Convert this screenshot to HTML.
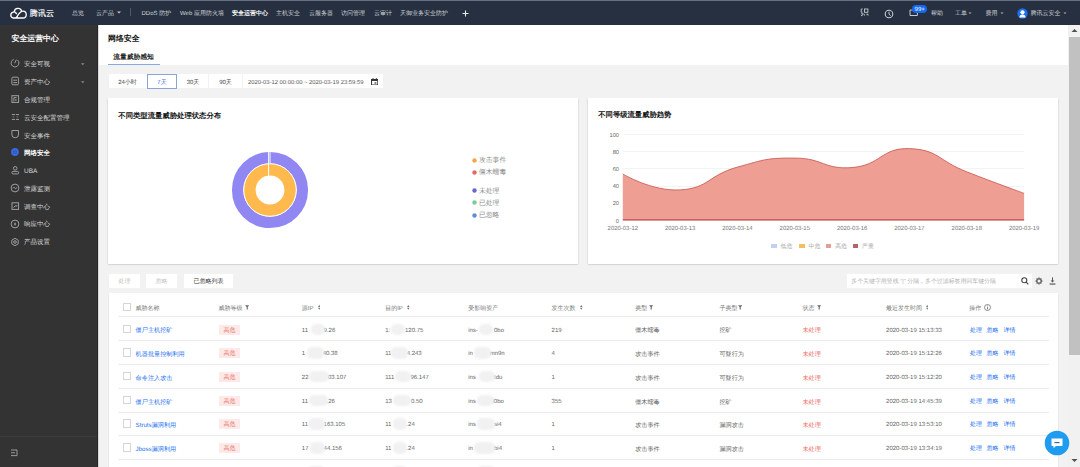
<!DOCTYPE html><html><head><meta charset="utf-8"><style>
html,body{margin:0;padding:0;width:1080px;height:467px;overflow:hidden;background:#f2f2f2;font-family:"Liberation Sans",sans-serif;text-rendering:geometricPrecision;}
.t{position:absolute;white-space:nowrap;}
.r{position:absolute;box-sizing:border-box;}
svg{position:absolute;}
</style></head><body>
<div class="r" style="left:0px;top:0px;width:1080px;height:25px;background:#263040;"></div>
<div class="r" style="left:0px;top:0px;width:1080px;height:1px;background:#687080;"></div>
<svg style="left:6px;top:3px" width="24" height="20" viewBox="0 0 24 20"><path d="M15.7 7.9 A3.9 3.9 0 0 0 8.2 8.6 L10.5 10.6 M7.5 9.1 A3.0 3.0 0 0 0 7.1 15.0 L17.0 15.0 A3.4 3.4 0 0 0 16.7 8.2 C14.6 8.2 13.4 10.2 12.3 11.7 C11.3 13.1 10.6 14.6 9.6 15.0" fill="none" stroke="#fff" stroke-width="1.3" stroke-linejoin="round" stroke-linecap="round"/></svg>
<div class="t" style="left:29.5px;top:7.85px;font-size:8.2px;line-height:12.299999999999999px;color:#ffffff;font-weight:normal;-webkit-text-stroke:0.15px #fff;">腾讯云</div>
<div class="t" style="left:72px;top:10.10px;font-size:6px;line-height:9.0px;color:#d2d5db;font-weight:normal;">总览</div>
<div class="t" style="left:96px;top:10.10px;font-size:6px;line-height:9.0px;color:#d2d5db;font-weight:normal;">云产品</div>
<svg style="left:117px;top:11px" width="4" height="3"><path d="M0 0.5 L4 0.5 L2 2.5Z" fill="#c5c9d0"/></svg>
<div class="r" style="left:130px;top:8px;width:1px;height:8px;background:#4f5664;"></div>
<div class="t" style="left:141.5px;top:10.10px;font-size:6px;line-height:9.0px;color:#d2d5db;font-weight:normal;">DDoS 防护</div>
<div class="t" style="left:180px;top:10.10px;font-size:6px;line-height:9.0px;color:#d2d5db;font-weight:normal;">Web 应用防火墙</div>
<div class="t" style="left:232px;top:10.10px;font-size:6px;line-height:9.0px;color:#fff;font-weight:bold;">安全运营中心</div>
<div class="t" style="left:276px;top:10.10px;font-size:6px;line-height:9.0px;color:#d2d5db;font-weight:normal;">主机安全</div>
<div class="t" style="left:309px;top:10.10px;font-size:6px;line-height:9.0px;color:#d2d5db;font-weight:normal;">云服务器</div>
<div class="t" style="left:341px;top:10.10px;font-size:6px;line-height:9.0px;color:#d2d5db;font-weight:normal;">访问管理</div>
<div class="t" style="left:374px;top:10.10px;font-size:6px;line-height:9.0px;color:#d2d5db;font-weight:normal;">云审计</div>
<div class="t" style="left:400px;top:10.10px;font-size:6px;line-height:9.0px;color:#d2d5db;font-weight:normal;">天御业务安全防护</div>
<svg style="left:462px;top:9.5px" width="7" height="7"><path d="M3.5 0.5V6.5M0.5 3.5H6.5" stroke="#e8eaee" stroke-width="1.1"/></svg>
<svg style="left:860px;top:8px" width="9" height="9" viewBox="0 0 9 9"><path d="M2.6 1H1.2V4.2H2.6" fill="none" stroke="#c5c9d0" stroke-width="0.9"/><rect x="4.5" y="1" width="3.4" height="3.3" fill="none" stroke="#c5c9d0" stroke-width="0.9"/><path d="M1 5.8H3.4L2.2 7.6H1M4.6 6.2V7.6M6.3 6.2H8V7.6" fill="none" stroke="#c5c9d0" stroke-width="0.9"/></svg>
<svg style="left:884px;top:8.5px" width="10" height="10" viewBox="0 0 10 10"><circle cx="5" cy="5" r="3.8" fill="none" stroke="#c5c9d0" stroke-width="1.1"/><path d="M5 2.7V5.2L6.6 6.6" fill="none" stroke="#c5c9d0" stroke-width="1"/></svg>
<svg style="left:908.5px;top:9px" width="10" height="8" viewBox="0 0 10 8"><path d="M1 1V6.5H8.4V3.5" fill="none" stroke="#c5c9d0" stroke-width="1"/><path d="M1 1H4L5.2 2.2" fill="none" stroke="#c5c9d0" stroke-width="0.9"/></svg>
<div class="r" style="left:912px;top:4.9px;width:15.4px;height:8.2px;background:#1667f0;border-radius:4.1px;"></div>
<div class="t" style="left:911.70px;width:16px;text-align:center;top:6.30px;font-size:6px;line-height:9.0px;color:#fff;font-weight:normal;">99+</div>
<div class="t" style="left:931px;top:10.10px;font-size:6px;line-height:9.0px;color:#d2d5db;font-weight:normal;">帮助</div>
<div class="t" style="left:955px;top:10.10px;font-size:6px;line-height:9.0px;color:#d2d5db;font-weight:normal;">工单</div>
<svg style="left:967.5px;top:12px" width="4" height="3"><path d="M0.5 0.6 L3.5 0.6 L2 2.1Z" fill="#b5bac3"/></svg>
<div class="t" style="left:985.5px;top:10.10px;font-size:6px;line-height:9.0px;color:#d2d5db;font-weight:normal;">费用</div>
<svg style="left:999.5px;top:12px" width="4" height="3"><path d="M0.5 0.6 L3.5 0.6 L2 2.1Z" fill="#b5bac3"/></svg>
<svg style="left:1017px;top:7.5px" width="11" height="11" viewBox="0 0 11 11"><circle cx="5.5" cy="5.5" r="5.2" fill="#1b6df2"/><circle cx="5.5" cy="4.3" r="2.1" fill="#fff"/><path d="M2.4 9.6 Q2.6 6.6 5.5 6.6 Q8.4 6.6 8.6 9.6 Z" fill="#fff"/></svg>
<div class="t" style="left:1030.5px;top:10.10px;font-size:6px;line-height:9.0px;color:#d2d5db;font-weight:normal;">腾讯云安全</div>
<svg style="left:1063px;top:12px" width="4" height="3"><path d="M0.5 0.6 L3.5 0.6 L2 2.1Z" fill="#b5bac3"/></svg>
<div class="r" style="left:0px;top:25px;width:98px;height:442px;background:#333333;"></div>
<div class="t" style="left:11.5px;top:33.17px;font-size:7.9px;line-height:11.850000000000001px;color:#fff;font-weight:bold;">安全运营中心</div>
<div class="t" style="left:24px;top:60.42px;font-size:6.5px;line-height:9.75px;color:#d9d9d9;font-weight:normal;">安全可视</div>
<svg style="left:81px;top:62.80px" width="4" height="3"><path d="M0 0.3 L3.5 0.3 L1.75 2.2Z" fill="#8a8a8a"/></svg>
<svg style="left:9px;top:57.30px" width="12" height="12" viewBox="0 0 12 12"><path d="M8.5 3.0 A3.9 3.9 0 1 1 4.67 2.34" fill="none" stroke="#a3a3a3" stroke-width="0.95"/><path d="M7.4 2.6 L5.7 6.2" fill="none" stroke="#a3a3a3" stroke-width="0.95"/></svg>
<div class="t" style="left:24px;top:78.19px;font-size:6.5px;line-height:9.75px;color:#d9d9d9;font-weight:normal;">资产中心</div>
<svg style="left:81px;top:80.57px" width="4" height="3"><path d="M0 0.3 L3.5 0.3 L1.75 2.2Z" fill="#8a8a8a"/></svg>
<svg style="left:9px;top:75.00px" width="12" height="12" viewBox="0 0 12 12"><rect x="2.9" y="2.2" width="6.5" height="7.6" rx="1" fill="none" stroke="#a3a3a3" stroke-width="0.95"/><path d="M4.3 5.2H8M4.3 7.6H8" fill="none" stroke="#a3a3a3" stroke-width="0.95"/></svg>
<div class="t" style="left:24px;top:95.97px;font-size:6.5px;line-height:9.75px;color:#d9d9d9;font-weight:normal;">合规管理</div>
<svg style="left:9px;top:93.40px" width="12" height="12" viewBox="0 0 12 12"><rect x="2.9" y="2.7" width="6.7" height="6.7" fill="none" stroke="#a3a3a3" stroke-width="0.95"/><path d="M4.9 8.5V4.6H7.6" fill="none" stroke="#a3a3a3" stroke-width="0.95"/><rect x="6.2" y="6.2" width="1.4" height="1.4" fill="#a3a3a3"/></svg>
<div class="t" style="left:24px;top:113.73px;font-size:6.5px;line-height:9.75px;color:#d9d9d9;font-weight:normal;">云安全配置管理</div>
<svg style="left:9px;top:111.00px" width="12" height="12" viewBox="0 0 12 12"><path d="M2.8 3.6H6M6.9 3.6H10M2.8 8.4H6M6.9 8.4H10" fill="none" stroke="#a3a3a3" stroke-width="0.95"/><path d="M3.6 6H5.2M7.6 6H9.2" fill="none" stroke="#8a8a8a" stroke-width="0.8"/></svg>
<div class="t" style="left:24px;top:131.50px;font-size:6.5px;line-height:9.75px;color:#d9d9d9;font-weight:normal;">安全事件</div>
<svg style="left:9px;top:128.00px" width="12" height="12" viewBox="0 0 12 12"><path d="M2.9 2.5H9.5V6.9Q9.5 9.7 6.2 9.7Q2.9 9.7 2.9 6.9Z" fill="none" stroke="#a3a3a3" stroke-width="0.95"/><circle cx="6.2" cy="8.3" r="0.8" fill="#333"/></svg>
<div class="t" style="left:24px;top:149.27px;font-size:6.5px;line-height:9.75px;color:#fff;font-weight:bold;">网络安全</div>
<svg style="left:9px;top:146.20px" width="12" height="12" viewBox="0 0 12 12"><circle cx="6" cy="6" r="3.9" fill="#3a69dc"/><path d="M4 5.1H8M4 7.1H8" stroke="#2a4fb8" stroke-width="0.8"/></svg>
<div class="t" style="left:24px;top:167.05px;font-size:6.5px;line-height:9.75px;color:#d9d9d9;font-weight:normal;">UBA</div>
<svg style="left:9px;top:164.10px" width="12" height="12" viewBox="0 0 12 12"><circle cx="6.2" cy="4.3" r="1.8" fill="none" stroke="#a3a3a3" stroke-width="0.95"/><rect x="2.9" y="7.4" width="6.8" height="2.5" rx="1.2" fill="none" stroke="#a3a3a3" stroke-width="0.95"/></svg>
<div class="t" style="left:24px;top:184.81px;font-size:6.5px;line-height:9.75px;color:#d9d9d9;font-weight:normal;">泄露监测</div>
<svg style="left:9px;top:182.20px" width="12" height="12" viewBox="0 0 12 12"><circle cx="6" cy="6" r="3.9" fill="none" stroke="#a3a3a3" stroke-width="0.95"/><path d="M3.9 6.3L5 5.2L6.5 6.8L8.1 5.4" fill="none" stroke="#a3a3a3" stroke-width="0.95"/></svg>
<div class="t" style="left:24px;top:202.58px;font-size:6.5px;line-height:9.75px;color:#d9d9d9;font-weight:normal;">调查中心</div>
<svg style="left:9px;top:200.20px" width="12" height="12" viewBox="0 0 12 12"><rect x="3" y="2.8" width="6.6" height="6.6" fill="none" stroke="#a3a3a3" stroke-width="0.95"/><path d="M4.6 7.6L6.2 5.8L7.4 6.4L8.2 5" fill="none" stroke="#a3a3a3" stroke-width="0.95"/></svg>
<div class="t" style="left:24px;top:220.36px;font-size:6.5px;line-height:9.75px;color:#d9d9d9;font-weight:normal;">响应中心</div>
<svg style="left:9px;top:217.70px" width="12" height="12" viewBox="0 0 12 12"><circle cx="6" cy="6" r="3.9" fill="none" stroke="#a3a3a3" stroke-width="0.95"/><ellipse cx="6" cy="6" rx="0.8" ry="1.6" fill="#a3a3a3"/></svg>
<div class="t" style="left:24px;top:238.12px;font-size:6.5px;line-height:9.75px;color:#d9d9d9;font-weight:normal;">产品设置</div>
<svg style="left:9px;top:236.10px" width="12" height="12" viewBox="0 0 12 12"><path d="M6 2.3L9.2 4.15V7.85L6 9.7L2.8 7.85V4.15Z" fill="none" stroke="#a3a3a3" stroke-width="0.95"/><circle cx="6" cy="6" r="1.3" fill="none" stroke="#a3a3a3" stroke-width="0.95"/></svg>
<div class="r" style="left:0px;top:436px;width:98px;height:1px;background:#3c3c3c;"></div>
<svg style="left:10px;top:449px" width="9" height="8" viewBox="0 0 9 8"><path d="M1 1H7M1 3.8H5M1 6.6H7M7 1V6.6" fill="none" stroke="#9a9a9a" stroke-width="1"/></svg>
<div class="r" style="left:97px;top:25px;width:1px;height:442px;background:#262626;"></div>
<div class="r" style="left:98px;top:25px;width:970px;height:40px;background:#fff;"></div>
<div class="r" style="left:98px;top:25px;width:1px;height:442px;background:#d9d9d9;"></div>
<div class="t" style="left:108px;top:32.77px;font-size:7.9px;line-height:11.850000000000001px;color:#111;font-weight:bold;">网络安全</div>
<div class="t" style="left:113.3px;top:53.34px;font-size:6.75px;line-height:10.125px;color:#222;font-weight:bold;">流量威胁感知</div>
<div class="r" style="left:108px;top:63.5px;width:52px;height:1.2px;background:#88a9e2;"></div>
<div class="r" style="left:108.5px;top:74px;width:68px;height:14px;background:#fff;"></div>
<div class="r" style="left:177px;top:74px;width:31px;height:14px;background:#fff;"></div>
<div class="r" style="left:208.5px;top:74px;width:33.5px;height:14px;background:#fff;"></div>
<div class="r" style="left:243px;top:74px;width:140px;height:14px;background:#fff;"></div>
<div class="r" style="left:146.5px;top:74px;width:30.5px;height:14.5px;background:#fff;border:0.9px solid #8ba4d6;"></div>
<div class="t" style="left:107.50px;width:40px;text-align:center;top:79.20px;font-size:6px;line-height:9.0px;color:#444;font-weight:normal;">24小时</div>
<div class="t" style="left:147.00px;width:30px;text-align:center;top:79.20px;font-size:6px;line-height:9.0px;color:#3b74e0;font-weight:normal;">7天</div>
<div class="t" style="left:178.00px;width:30px;text-align:center;top:79.20px;font-size:6px;line-height:9.0px;color:#444;font-weight:normal;">30天</div>
<div class="t" style="left:210.50px;width:30px;text-align:center;top:79.20px;font-size:6px;line-height:9.0px;color:#444;font-weight:normal;">90天</div>
<div class="t" style="left:248px;top:78.90px;font-size:5.87px;line-height:8.805px;color:#555;font-weight:normal;">2020-03-12 00:00:00 ~ 2020-03-19 23:59:59</div>
<svg style="left:370.8px;top:77.5px" width="7.4" height="7.4" viewBox="0 0 8 8"><path d="M0.6 1.5H7.4V7.5H0.6Z" fill="none" stroke="#333" stroke-width="1.1"/><path d="M0.6 1.5H7.4V3.2H0.6Z" fill="#333"/><path d="M2.2 0.1V1.5M5.8 0.1V1.5" stroke="#333" stroke-width="1"/><rect x="3.8" y="4.8" width="2" height="1.3" fill="#333"/></svg>
<div class="r" style="left:108px;top:98px;width:470px;height:166px;background:#fff;box-shadow:0 0.8px 1.5px rgba(0,0,0,0.3);"></div>
<div class="r" style="left:588px;top:98px;width:470px;height:166px;background:#fff;box-shadow:0 0.8px 1.5px rgba(0,0,0,0.3);"></div>
<div class="t" style="left:118.3px;top:109.54px;font-size:7.35px;line-height:11.024999999999999px;color:#111;font-weight:bold;">不同类型流量威胁处理状态分布</div>
<div class="t" style="left:598.3px;top:109.58px;font-size:7.3px;line-height:10.95px;color:#111;font-weight:bold;">不同等级流量威胁趋势</div>
<svg style="left:220px;top:140px" width="100" height="100" viewBox="0 0 100 100">
<circle cx="50" cy="50" r="32.3" fill="none" stroke="#9087f3" stroke-width="11.5"/>
<circle cx="50" cy="50" r="20.3" fill="none" stroke="#ffb94d" stroke-width="11.8"/>
<circle cx="50" cy="50" r="26.3" fill="none" stroke="#fff" stroke-width="1"/>
<path d="M48.6 12 V44" stroke="#fff" stroke-width="1"/>
<path d="M50.2 12 V24" stroke="#fff" stroke-width="0.7"/>
<path d="M49.4 12 V24" stroke="#c9c6f2" stroke-width="0.9"/>
</svg>
<svg style="left:471.7px;top:157.60px" width="5" height="5"><circle cx="2.5" cy="2.5" r="2.2" fill="#f7a645"/></svg>
<div class="t" style="left:478.9px;top:156.16px;font-size:6.85px;line-height:10.274999999999999px;color:#8a8a8a;font-weight:normal;">攻击事件</div>
<svg style="left:471.7px;top:169.60px" width="5" height="5"><circle cx="2.5" cy="2.5" r="2.2" fill="#e06a64"/></svg>
<div class="t" style="left:478.9px;top:168.16px;font-size:6.85px;line-height:10.274999999999999px;color:#8a8a8a;font-weight:normal;">僵木蠕毒</div>
<svg style="left:471.7px;top:188.40px" width="5" height="5"><circle cx="2.5" cy="2.5" r="2.2" fill="#6a66d2"/></svg>
<div class="t" style="left:478.9px;top:186.96px;font-size:6.85px;line-height:10.274999999999999px;color:#8a8a8a;font-weight:normal;">未处理</div>
<svg style="left:471.7px;top:200.40px" width="5" height="5"><circle cx="2.5" cy="2.5" r="2.2" fill="#78cf9a"/></svg>
<div class="t" style="left:478.9px;top:198.96px;font-size:6.85px;line-height:10.274999999999999px;color:#8a8a8a;font-weight:normal;">已处理</div>
<svg style="left:471.7px;top:212.60px" width="5" height="5"><circle cx="2.5" cy="2.5" r="2.2" fill="#5b8ee0"/></svg>
<div class="t" style="left:478.9px;top:211.16px;font-size:6.85px;line-height:10.274999999999999px;color:#8a8a8a;font-weight:normal;">已忽略</div>
<div class="r" style="left:622.8px;top:202.8px;width:401px;height:0.6px;background:#f3f3f3;"></div>
<div class="r" style="left:622.8px;top:185.6px;width:401px;height:0.6px;background:#f3f3f3;"></div>
<div class="r" style="left:622.8px;top:168.4px;width:401px;height:0.6px;background:#f3f3f3;"></div>
<div class="r" style="left:622.8px;top:151.2px;width:401px;height:0.6px;background:#f3f3f3;"></div>
<div class="r" style="left:622.8px;top:134.0px;width:401px;height:0.6px;background:#f3f3f3;"></div>
<div class="t" style="left:589.00px;width:30px;text-align:right;top:217.53px;font-size:5.7px;line-height:8.55px;color:#666;font-weight:normal;">0</div>
<div class="t" style="left:589.00px;width:30px;text-align:right;top:200.33px;font-size:5.7px;line-height:8.55px;color:#666;font-weight:normal;">20</div>
<div class="t" style="left:589.00px;width:30px;text-align:right;top:183.12px;font-size:5.7px;line-height:8.55px;color:#666;font-weight:normal;">40</div>
<div class="t" style="left:589.00px;width:30px;text-align:right;top:165.93px;font-size:5.7px;line-height:8.55px;color:#666;font-weight:normal;">60</div>
<div class="t" style="left:589.00px;width:30px;text-align:right;top:148.72px;font-size:5.7px;line-height:8.55px;color:#666;font-weight:normal;">80</div>
<div class="t" style="left:589.00px;width:30px;text-align:right;top:131.53px;font-size:5.7px;line-height:8.55px;color:#666;font-weight:normal;">100</div>
<div class="t" style="left:597.80px;width:50px;text-align:center;top:225.14px;font-size:5.95px;line-height:8.925px;color:#777;font-weight:normal;">2020-03-12</div>
<div class="t" style="left:655.13px;width:50px;text-align:center;top:225.14px;font-size:5.95px;line-height:8.925px;color:#777;font-weight:normal;">2020-03-13</div>
<div class="t" style="left:712.46px;width:50px;text-align:center;top:225.14px;font-size:5.95px;line-height:8.925px;color:#777;font-weight:normal;">2020-03-14</div>
<div class="t" style="left:769.79px;width:50px;text-align:center;top:225.14px;font-size:5.95px;line-height:8.925px;color:#777;font-weight:normal;">2020-03-15</div>
<div class="t" style="left:827.12px;width:50px;text-align:center;top:225.14px;font-size:5.95px;line-height:8.925px;color:#777;font-weight:normal;">2020-03-16</div>
<div class="t" style="left:884.45px;width:50px;text-align:center;top:225.14px;font-size:5.95px;line-height:8.925px;color:#777;font-weight:normal;">2020-03-17</div>
<div class="t" style="left:941.78px;width:50px;text-align:center;top:225.14px;font-size:5.95px;line-height:8.925px;color:#777;font-weight:normal;">2020-03-18</div>
<div class="t" style="left:999.11px;width:50px;text-align:center;top:225.14px;font-size:5.95px;line-height:8.925px;color:#777;font-weight:normal;">2020-03-19</div>
<svg style="left:0;top:0" width="1080" height="467" viewBox="0 0 1080 467">
<path d="M622.80 173.99 C622.80 173.99 651.98 191.59 680.13 189.90 C709.31 188.15 707.92 175.31 737.46 167.11 C765.25 159.40 766.14 157.97 794.79 158.08 C823.47 158.19 824.00 169.86 852.12 167.54 C881.33 165.13 881.13 147.56 909.45 148.62 C938.46 149.71 937.97 160.60 966.78 171.84 C995.30 182.96 1024.11 193.34 1024.11 193.34 L1024.11 220.0 L622.80 220.0 Z" fill="#ee9e93"/>
<path d="M622.80 173.99 C622.80 173.99 651.98 191.59 680.13 189.90 C709.31 188.15 707.92 175.31 737.46 167.11 C765.25 159.40 766.14 157.97 794.79 158.08 C823.47 158.19 824.00 169.86 852.12 167.54 C881.33 165.13 881.13 147.56 909.45 148.62 C938.46 149.71 937.97 160.60 966.78 171.84 C995.30 182.96 1024.11 193.34 1024.11 193.34" fill="none" stroke="#c9625b" stroke-width="0.9"/>
<rect x="622.8" y="219.1" width="401.31" height="1.5" fill="#c65858"/>
</svg>
<div class="r" style="left:771px;top:243.8px;width:5.5px;height:4.4px;background:#c2d1f0;"></div>
<div class="t" style="left:780.5px;top:242.78px;font-size:5.9px;line-height:8.850000000000001px;color:#a5a5a5;font-weight:normal;">低危</div>
<div class="r" style="left:799px;top:243.8px;width:5.5px;height:4.4px;background:#f2bf5e;"></div>
<div class="t" style="left:808.5px;top:242.78px;font-size:5.9px;line-height:8.850000000000001px;color:#a5a5a5;font-weight:normal;">中危</div>
<div class="r" style="left:825.7px;top:243.8px;width:5.5px;height:4.4px;background:#e09f97;"></div>
<div class="t" style="left:835.2px;top:242.78px;font-size:5.9px;line-height:8.850000000000001px;color:#a5a5a5;font-weight:normal;">高危</div>
<div class="r" style="left:852.6px;top:243.8px;width:5.5px;height:4.4px;background:#b26468;"></div>
<div class="t" style="left:862.1px;top:242.78px;font-size:5.9px;line-height:8.850000000000001px;color:#a5a5a5;font-weight:normal;">严重</div>
<div class="r" style="left:109px;top:273.6px;width:31px;height:14.5px;background:#fff;"></div>
<div class="r" style="left:146px;top:273.6px;width:31px;height:14.5px;background:#fff;"></div>
<div class="r" style="left:184px;top:273.6px;width:49px;height:14.5px;background:#fff;"></div>
<div class="t" style="left:109.50px;width:30px;text-align:center;top:278.20px;font-size:6px;line-height:9.0px;color:#c4c4c4;font-weight:normal;">处理</div>
<div class="t" style="left:146.50px;width:30px;text-align:center;top:278.20px;font-size:6px;line-height:9.0px;color:#c4c4c4;font-weight:normal;">忽略</div>
<div class="t" style="left:184.00px;width:49px;text-align:center;top:278.20px;font-size:6px;line-height:9.0px;color:#333;font-weight:normal;">已忽略列表</div>
<div class="r" style="left:846.5px;top:274px;width:185.5px;height:14px;background:#fff;"></div>
<div class="t" style="left:851.3px;top:277.76px;font-size:5.92px;line-height:8.879999999999999px;color:#b0b0b0;font-weight:normal;">多个关键字用竖线 “|” 分隔，多个过滤标签用回车键分隔</div>
<svg style="left:1020.5px;top:277px" width="8" height="8" viewBox="0 0 8 8"><circle cx="3.3" cy="3.3" r="2.5" fill="none" stroke="#444" stroke-width="1.1"/><path d="M5.2 5.2L7.3 7.3" stroke="#444" stroke-width="1.2"/></svg>
<svg style="left:1035px;top:277px" width="8" height="8" viewBox="0 0 8 8"><path d="M3.3 0.6H4.7L4.9 1.7L5.9 1.1L6.9 2.1L6.3 3.1L7.4 3.3V4.7L6.3 4.9L6.9 5.9L5.9 6.9L4.9 6.3L4.7 7.4H3.3L3.1 6.3L2.1 6.9L1.1 5.9L1.7 4.9L0.6 4.7V3.3L1.7 3.1L1.1 2.1L2.1 1.1L3.1 1.7Z" fill="#666"/><circle cx="4" cy="4" r="1.5" fill="#f2f2f2"/></svg>
<svg style="left:1048.8px;top:277px" width="7" height="8" viewBox="0 0 7 8"><path d="M3.5 0.4V5" stroke="#555" stroke-width="1"/><path d="M1.6 3.4L3.5 5.4L5.4 3.4Z" fill="#555"/><rect x="0.6" y="6.4" width="5.8" height="1.3" fill="#666"/></svg>
<div class="r" style="left:108.5px;top:293.3px;width:949.2px;height:200px;background:#fff;box-shadow:0 0.5px 1.5px rgba(0,0,0,0.15);"></div>
<div class="r" style="left:123px;top:302.7px;width:8px;height:8.6px;border:0.8px solid #d5d5d5;background:#fff;border-radius:0.5px;"></div>
<div class="t" style="left:135.6px;top:305.20px;font-size:6px;line-height:9.0px;color:#777;font-weight:normal;">威胁名称</div>
<div class="t" style="left:218.6px;top:305.20px;font-size:6px;line-height:9.0px;color:#777;font-weight:normal;">威胁等级</div>
<div class="t" style="left:301.8px;top:305.20px;font-size:6px;line-height:9.0px;color:#777;font-weight:normal;">源IP</div>
<div class="t" style="left:385.2px;top:305.20px;font-size:6px;line-height:9.0px;color:#777;font-weight:normal;">目的IP</div>
<div class="t" style="left:468.2px;top:305.20px;font-size:6px;line-height:9.0px;color:#777;font-weight:normal;">受影响资产</div>
<div class="t" style="left:551.6px;top:305.20px;font-size:6px;line-height:9.0px;color:#777;font-weight:normal;">发生次数</div>
<div class="t" style="left:635.2px;top:305.20px;font-size:6px;line-height:9.0px;color:#777;font-weight:normal;">类型</div>
<div class="t" style="left:719.4px;top:305.20px;font-size:6px;line-height:9.0px;color:#777;font-weight:normal;">子类型</div>
<div class="t" style="left:802.4px;top:305.20px;font-size:6px;line-height:9.0px;color:#777;font-weight:normal;">状态</div>
<div class="t" style="left:886.1px;top:305.20px;font-size:6px;line-height:9.0px;color:#777;font-weight:normal;">最近发生时间</div>
<div class="t" style="left:969.3px;top:305.20px;font-size:6px;line-height:9.0px;color:#777;font-weight:normal;">操作</div>
<svg style="left:244.70px;top:305.2px" width="4.4" height="4.6" viewBox="0 0 4.4 4.6"><path d="M0.1 0.2H4.3L2.75 1.9V4.4H1.65V1.9Z" fill="#666"/></svg>
<svg style="left:317.80px;top:305.1px" width="2.6" height="4.7" viewBox="0 0 2.6 4.7"><path d="M1.3 0L2.6 2.05H0Z M1.3 4.7L2.6 2.65H0Z" fill="#777"/></svg>
<svg style="left:407.00px;top:305.1px" width="2.6" height="4.7" viewBox="0 0 2.6 4.7"><path d="M1.3 0L2.6 2.05H0Z M1.3 4.7L2.6 2.65H0Z" fill="#777"/></svg>
<svg style="left:580.20px;top:305.1px" width="2.6" height="4.7" viewBox="0 0 2.6 4.7"><path d="M1.3 0L2.6 2.05H0Z M1.3 4.7L2.6 2.65H0Z" fill="#777"/></svg>
<svg style="left:648.80px;top:305.2px" width="4.4" height="4.6" viewBox="0 0 4.4 4.6"><path d="M0.1 0.2H4.3L2.75 1.9V4.4H1.65V1.9Z" fill="#666"/></svg>
<svg style="left:738.40px;top:305.2px" width="4.4" height="4.6" viewBox="0 0 4.4 4.6"><path d="M0.1 0.2H4.3L2.75 1.9V4.4H1.65V1.9Z" fill="#666"/></svg>
<svg style="left:816.80px;top:305.2px" width="4.4" height="4.6" viewBox="0 0 4.4 4.6"><path d="M0.1 0.2H4.3L2.75 1.9V4.4H1.65V1.9Z" fill="#666"/></svg>
<svg style="left:925.70px;top:305.1px" width="2.6" height="4.7" viewBox="0 0 2.6 4.7"><path d="M1.3 0L2.6 2.05H0Z M1.3 4.7L2.6 2.65H0Z" fill="#777"/></svg>
<svg style="left:984.00px;top:303.5px" width="7" height="7" viewBox="0 0 7 7"><circle cx="3.5" cy="3.5" r="3" fill="none" stroke="#666" stroke-width="0.75"/><path d="M3.5 2.9V5.4M3.5 1.6V2.3" stroke="#666" stroke-width="0.8"/></svg>
<div class="r" style="left:117.5px;top:316.2px;width:931px;height:0.8px;background:#ececec;"></div>
<div class="r" style="left:123px;top:324.5px;width:8px;height:8.6px;border:0.8px solid #d5d5d5;background:#fff;border-radius:0.5px;"></div>
<div class="t" style="left:135.6px;top:326.49px;font-size:6.15px;line-height:9.225000000000001px;color:#1c6ff0;font-weight:normal;">僵尸主机挖矿</div>
<div class="r" style="left:219.4px;top:324.6px;width:20.2px;height:10px;background:#fdeae8;"></div>
<div class="t" style="left:219.50px;width:20px;text-align:center;top:326.60px;font-size:6px;line-height:9.0px;color:#e86a62;font-weight:normal;">高危</div>
<div class="t" style="left:301.8px;top:326.60px;font-size:6px;line-height:9.0px;color:#666;font-weight:normal;">11</div>
<div class="t" style="left:323.6px;top:326.60px;font-size:6px;line-height:9.0px;color:#666;font-weight:normal;">9.26</div>
<div class="r" style="left:311px;top:323.5px;width:14px;height:11.5px;background:#f1f1f1;border-radius:5px;filter:blur(0.9px);"></div>
<div class="t" style="left:385.2px;top:326.60px;font-size:6px;line-height:9.0px;color:#666;font-weight:normal;">1:</div>
<div class="t" style="left:405px;top:326.60px;font-size:6px;line-height:9.0px;color:#666;font-weight:normal;">120.75</div>
<div class="r" style="left:391px;top:323.5px;width:14px;height:11.5px;background:#f1f1f1;border-radius:5px;filter:blur(0.9px);"></div>
<div class="t" style="left:468.2px;top:326.60px;font-size:6px;line-height:9.0px;color:#666;font-weight:normal;">ins-</div>
<div class="t" style="left:494px;top:326.60px;font-size:6px;line-height:9.0px;color:#666;font-weight:normal;">0bo</div>
<div class="r" style="left:478.8px;top:323.5px;width:14.5px;height:11.5px;background:#f1f1f1;border-radius:5px;filter:blur(0.9px);"></div>
<div class="t" style="left:551.6px;top:326.60px;font-size:6px;line-height:9.0px;color:#666;font-weight:normal;">219</div>
<div class="t" style="left:635.2px;top:326.49px;font-size:6.15px;line-height:9.225000000000001px;color:#666;font-weight:normal;">僵木蠕毒</div>
<div class="t" style="left:719.4px;top:326.49px;font-size:6.15px;line-height:9.225000000000001px;color:#666;font-weight:normal;">挖矿</div>
<div class="t" style="left:802.4px;top:326.45px;font-size:6.2px;line-height:9.3px;color:#ec6a62;font-weight:normal;">未处理</div>
<div class="t" style="left:886.1px;top:326.60px;font-size:6px;line-height:9.0px;color:#666;font-weight:normal;">2020-03-19 15:13:33</div>
<div class="t" style="left:970px;top:326.60px;font-size:6px;line-height:9.0px;color:#1c6ff0;font-weight:normal;">处理</div>
<div class="t" style="left:986.6px;top:326.60px;font-size:6px;line-height:9.0px;color:#1c6ff0;font-weight:normal;">忽略</div>
<div class="t" style="left:1003.4px;top:326.60px;font-size:6px;line-height:9.0px;color:#1c6ff0;font-weight:normal;">详情</div>
<div class="r" style="left:117.5px;top:340.4px;width:931px;height:0.8px;background:#ececec;"></div>
<div class="r" style="left:123px;top:348.2px;width:8px;height:8.6px;border:0.8px solid #d5d5d5;background:#fff;border-radius:0.5px;"></div>
<div class="t" style="left:135.6px;top:350.19px;font-size:6.15px;line-height:9.225000000000001px;color:#1c6ff0;font-weight:normal;">机器批量控制利用</div>
<div class="r" style="left:219.4px;top:348.3px;width:20.2px;height:10px;background:#fdeae8;"></div>
<div class="t" style="left:219.50px;width:20px;text-align:center;top:350.30px;font-size:6px;line-height:9.0px;color:#e86a62;font-weight:normal;">高危</div>
<div class="t" style="left:301.8px;top:350.30px;font-size:6px;line-height:9.0px;color:#666;font-weight:normal;">1</div>
<div class="t" style="left:322.7px;top:350.30px;font-size:6px;line-height:9.0px;color:#666;font-weight:normal;">40.38</div>
<div class="r" style="left:307px;top:347.2px;width:16.7px;height:11.5px;background:#f1f1f1;border-radius:5px;filter:blur(0.9px);"></div>
<div class="t" style="left:385.2px;top:350.30px;font-size:6px;line-height:9.0px;color:#666;font-weight:normal;">11</div>
<div class="t" style="left:406.7px;top:350.30px;font-size:6px;line-height:9.0px;color:#666;font-weight:normal;">4.243</div>
<div class="r" style="left:391px;top:347.2px;width:16.7px;height:11.5px;background:#f1f1f1;border-radius:5px;filter:blur(0.9px);"></div>
<div class="t" style="left:468.2px;top:350.30px;font-size:6px;line-height:9.0px;color:#666;font-weight:normal;">in</div>
<div class="t" style="left:489.7px;top:350.30px;font-size:6px;line-height:9.0px;color:#666;font-weight:normal;">mn9n</div>
<div class="r" style="left:474.4px;top:347.2px;width:16.3px;height:11.5px;background:#f1f1f1;border-radius:5px;filter:blur(0.9px);"></div>
<div class="t" style="left:551.6px;top:350.30px;font-size:6px;line-height:9.0px;color:#666;font-weight:normal;">4</div>
<div class="t" style="left:635.2px;top:350.19px;font-size:6.15px;line-height:9.225000000000001px;color:#666;font-weight:normal;">攻击事件</div>
<div class="t" style="left:719.4px;top:350.19px;font-size:6.15px;line-height:9.225000000000001px;color:#666;font-weight:normal;">可疑行为</div>
<div class="t" style="left:802.4px;top:350.15px;font-size:6.2px;line-height:9.3px;color:#ec6a62;font-weight:normal;">未处理</div>
<div class="t" style="left:886.1px;top:350.30px;font-size:6px;line-height:9.0px;color:#666;font-weight:normal;">2020-03-19 15:12:26</div>
<div class="t" style="left:970px;top:350.30px;font-size:6px;line-height:9.0px;color:#1c6ff0;font-weight:normal;">处理</div>
<div class="t" style="left:986.6px;top:350.30px;font-size:6px;line-height:9.0px;color:#1c6ff0;font-weight:normal;">忽略</div>
<div class="t" style="left:1003.4px;top:350.30px;font-size:6px;line-height:9.0px;color:#1c6ff0;font-weight:normal;">详情</div>
<div class="r" style="left:117.5px;top:364.1px;width:931px;height:0.8px;background:#ececec;"></div>
<div class="r" style="left:123px;top:371.9px;width:8px;height:8.6px;border:0.8px solid #d5d5d5;background:#fff;border-radius:0.5px;"></div>
<div class="t" style="left:135.6px;top:373.89px;font-size:6.15px;line-height:9.225000000000001px;color:#1c6ff0;font-weight:normal;">命令注入攻击</div>
<div class="r" style="left:219.4px;top:372.0px;width:20.2px;height:10px;background:#fdeae8;"></div>
<div class="t" style="left:219.50px;width:20px;text-align:center;top:374.00px;font-size:6px;line-height:9.0px;color:#e86a62;font-weight:normal;">高危</div>
<div class="t" style="left:301.8px;top:374.00px;font-size:6px;line-height:9.0px;color:#666;font-weight:normal;">22</div>
<div class="t" style="left:328px;top:374.00px;font-size:6px;line-height:9.0px;color:#666;font-weight:normal;">03.107</div>
<div class="r" style="left:309px;top:370.9px;width:20px;height:11.5px;background:#f1f1f1;border-radius:5px;filter:blur(0.9px);"></div>
<div class="t" style="left:385.2px;top:374.00px;font-size:6px;line-height:9.0px;color:#666;font-weight:normal;">111</div>
<div class="t" style="left:410.4px;top:374.00px;font-size:6px;line-height:9.0px;color:#666;font-weight:normal;">96.147</div>
<div class="r" style="left:394.7px;top:370.9px;width:16.7px;height:11.5px;background:#f1f1f1;border-radius:5px;filter:blur(0.9px);"></div>
<div class="t" style="left:468.2px;top:374.00px;font-size:6px;line-height:9.0px;color:#666;font-weight:normal;">ins</div>
<div class="t" style="left:494px;top:374.00px;font-size:6px;line-height:9.0px;color:#666;font-weight:normal;">tdu</div>
<div class="r" style="left:478.6px;top:370.9px;width:16.4px;height:11.5px;background:#f1f1f1;border-radius:5px;filter:blur(0.9px);"></div>
<div class="t" style="left:551.6px;top:374.00px;font-size:6px;line-height:9.0px;color:#666;font-weight:normal;">1</div>
<div class="t" style="left:635.2px;top:373.89px;font-size:6.15px;line-height:9.225000000000001px;color:#666;font-weight:normal;">攻击事件</div>
<div class="t" style="left:719.4px;top:373.89px;font-size:6.15px;line-height:9.225000000000001px;color:#666;font-weight:normal;">可疑行为</div>
<div class="t" style="left:802.4px;top:373.85px;font-size:6.2px;line-height:9.3px;color:#ec6a62;font-weight:normal;">未处理</div>
<div class="t" style="left:886.1px;top:374.00px;font-size:6px;line-height:9.0px;color:#666;font-weight:normal;">2020-03-19 15:12:20</div>
<div class="t" style="left:970px;top:374.00px;font-size:6px;line-height:9.0px;color:#1c6ff0;font-weight:normal;">处理</div>
<div class="t" style="left:986.6px;top:374.00px;font-size:6px;line-height:9.0px;color:#1c6ff0;font-weight:normal;">忽略</div>
<div class="t" style="left:1003.4px;top:374.00px;font-size:6px;line-height:9.0px;color:#1c6ff0;font-weight:normal;">详情</div>
<div class="r" style="left:117.5px;top:387.8px;width:931px;height:0.8px;background:#ececec;"></div>
<div class="r" style="left:123px;top:395.59999999999997px;width:8px;height:8.6px;border:0.8px solid #d5d5d5;background:#fff;border-radius:0.5px;"></div>
<div class="t" style="left:135.6px;top:397.59px;font-size:6.15px;line-height:9.225000000000001px;color:#1c6ff0;font-weight:normal;">僵尸主机挖矿</div>
<div class="r" style="left:219.4px;top:395.7px;width:20.2px;height:10px;background:#fdeae8;"></div>
<div class="t" style="left:219.50px;width:20px;text-align:center;top:397.70px;font-size:6px;line-height:9.0px;color:#e86a62;font-weight:normal;">高危</div>
<div class="t" style="left:301.8px;top:397.70px;font-size:6px;line-height:9.0px;color:#666;font-weight:normal;">11</div>
<div class="t" style="left:326.5px;top:397.70px;font-size:6px;line-height:9.0px;color:#666;font-weight:normal;">.26</div>
<div class="r" style="left:308.5px;top:394.6px;width:19.0px;height:11.5px;background:#f1f1f1;border-radius:5px;filter:blur(0.9px);"></div>
<div class="t" style="left:385.2px;top:397.70px;font-size:6px;line-height:9.0px;color:#666;font-weight:normal;">13</div>
<div class="t" style="left:411px;top:397.70px;font-size:6px;line-height:9.0px;color:#666;font-weight:normal;">0.50</div>
<div class="r" style="left:392.5px;top:394.6px;width:18.9px;height:11.5px;background:#f1f1f1;border-radius:5px;filter:blur(0.9px);"></div>
<div class="t" style="left:468.2px;top:397.70px;font-size:6px;line-height:9.0px;color:#666;font-weight:normal;">ins</div>
<div class="t" style="left:492.5px;top:397.70px;font-size:6px;line-height:9.0px;color:#666;font-weight:normal;">i0bo</div>
<div class="r" style="left:477px;top:394.6px;width:16.5px;height:11.5px;background:#f1f1f1;border-radius:5px;filter:blur(0.9px);"></div>
<div class="t" style="left:551.6px;top:397.70px;font-size:6px;line-height:9.0px;color:#666;font-weight:normal;">355</div>
<div class="t" style="left:635.2px;top:397.59px;font-size:6.15px;line-height:9.225000000000001px;color:#666;font-weight:normal;">僵木蠕毒</div>
<div class="t" style="left:719.4px;top:397.59px;font-size:6.15px;line-height:9.225000000000001px;color:#666;font-weight:normal;">挖矿</div>
<div class="t" style="left:802.4px;top:397.55px;font-size:6.2px;line-height:9.3px;color:#ec6a62;font-weight:normal;">未处理</div>
<div class="t" style="left:886.1px;top:397.70px;font-size:6px;line-height:9.0px;color:#666;font-weight:normal;">2020-03-19 14:45:39</div>
<div class="t" style="left:970px;top:397.70px;font-size:6px;line-height:9.0px;color:#1c6ff0;font-weight:normal;">处理</div>
<div class="t" style="left:986.6px;top:397.70px;font-size:6px;line-height:9.0px;color:#1c6ff0;font-weight:normal;">忽略</div>
<div class="t" style="left:1003.4px;top:397.70px;font-size:6px;line-height:9.0px;color:#1c6ff0;font-weight:normal;">详情</div>
<div class="r" style="left:117.5px;top:411.5px;width:931px;height:0.8px;background:#ececec;"></div>
<div class="r" style="left:123px;top:419.3px;width:8px;height:8.6px;border:0.8px solid #d5d5d5;background:#fff;border-radius:0.5px;"></div>
<div class="t" style="left:135.6px;top:421.29px;font-size:6.15px;line-height:9.225000000000001px;color:#1c6ff0;font-weight:normal;">Struts漏洞利用</div>
<div class="r" style="left:219.4px;top:419.40000000000003px;width:20.2px;height:10px;background:#fdeae8;"></div>
<div class="t" style="left:219.50px;width:20px;text-align:center;top:421.40px;font-size:6px;line-height:9.0px;color:#e86a62;font-weight:normal;">高危</div>
<div class="t" style="left:301.8px;top:421.40px;font-size:6px;line-height:9.0px;color:#666;font-weight:normal;">11</div>
<div class="t" style="left:323.6px;top:421.40px;font-size:6px;line-height:9.0px;color:#666;font-weight:normal;">163.105</div>
<div class="r" style="left:308px;top:418.3px;width:16.6px;height:11.5px;background:#f1f1f1;border-radius:5px;filter:blur(0.9px);"></div>
<div class="t" style="left:385.2px;top:421.40px;font-size:6px;line-height:9.0px;color:#666;font-weight:normal;">11</div>
<div class="t" style="left:406.4px;top:421.40px;font-size:6px;line-height:9.0px;color:#666;font-weight:normal;">.24</div>
<div class="r" style="left:392.5px;top:418.3px;width:14.9px;height:11.5px;background:#f1f1f1;border-radius:5px;filter:blur(0.9px);"></div>
<div class="t" style="left:468.2px;top:421.40px;font-size:6px;line-height:9.0px;color:#666;font-weight:normal;">ins</div>
<div class="t" style="left:494px;top:421.40px;font-size:6px;line-height:9.0px;color:#666;font-weight:normal;">si4</div>
<div class="r" style="left:477px;top:418.3px;width:18px;height:11.5px;background:#f1f1f1;border-radius:5px;filter:blur(0.9px);"></div>
<div class="t" style="left:551.6px;top:421.40px;font-size:6px;line-height:9.0px;color:#666;font-weight:normal;">1</div>
<div class="t" style="left:635.2px;top:421.29px;font-size:6.15px;line-height:9.225000000000001px;color:#666;font-weight:normal;">攻击事件</div>
<div class="t" style="left:719.4px;top:421.29px;font-size:6.15px;line-height:9.225000000000001px;color:#666;font-weight:normal;">漏洞攻击</div>
<div class="t" style="left:802.4px;top:421.25px;font-size:6.2px;line-height:9.3px;color:#ec6a62;font-weight:normal;">未处理</div>
<div class="t" style="left:886.1px;top:421.40px;font-size:6px;line-height:9.0px;color:#666;font-weight:normal;">2020-03-19 13:53:10</div>
<div class="t" style="left:970px;top:421.40px;font-size:6px;line-height:9.0px;color:#1c6ff0;font-weight:normal;">处理</div>
<div class="t" style="left:986.6px;top:421.40px;font-size:6px;line-height:9.0px;color:#1c6ff0;font-weight:normal;">忽略</div>
<div class="t" style="left:1003.4px;top:421.40px;font-size:6px;line-height:9.0px;color:#1c6ff0;font-weight:normal;">详情</div>
<div class="r" style="left:117.5px;top:435.2px;width:931px;height:0.8px;background:#ececec;"></div>
<div class="r" style="left:123px;top:443.0px;width:8px;height:8.6px;border:0.8px solid #d5d5d5;background:#fff;border-radius:0.5px;"></div>
<div class="t" style="left:135.6px;top:444.99px;font-size:6.15px;line-height:9.225000000000001px;color:#1c6ff0;font-weight:normal;">Jboss漏洞利用</div>
<div class="r" style="left:219.4px;top:443.1px;width:20.2px;height:10px;background:#fdeae8;"></div>
<div class="t" style="left:219.50px;width:20px;text-align:center;top:445.10px;font-size:6px;line-height:9.0px;color:#e86a62;font-weight:normal;">高危</div>
<div class="t" style="left:301.8px;top:445.10px;font-size:6px;line-height:9.0px;color:#666;font-weight:normal;">17</div>
<div class="t" style="left:323.6px;top:445.10px;font-size:6px;line-height:9.0px;color:#666;font-weight:normal;">44.156</div>
<div class="r" style="left:309.7px;top:442.0px;width:14.9px;height:11.5px;background:#f1f1f1;border-radius:5px;filter:blur(0.9px);"></div>
<div class="t" style="left:385.2px;top:445.10px;font-size:6px;line-height:9.0px;color:#666;font-weight:normal;">11</div>
<div class="t" style="left:406.4px;top:445.10px;font-size:6px;line-height:9.0px;color:#666;font-weight:normal;">.24</div>
<div class="r" style="left:392.5px;top:442.0px;width:14.9px;height:11.5px;background:#f1f1f1;border-radius:5px;filter:blur(0.9px);"></div>
<div class="t" style="left:468.2px;top:445.10px;font-size:6px;line-height:9.0px;color:#666;font-weight:normal;">in</div>
<div class="t" style="left:494px;top:445.10px;font-size:6px;line-height:9.0px;color:#666;font-weight:normal;">bi4</div>
<div class="r" style="left:474.4px;top:442.0px;width:20.6px;height:11.5px;background:#f1f1f1;border-radius:5px;filter:blur(0.9px);"></div>
<div class="t" style="left:551.6px;top:445.10px;font-size:6px;line-height:9.0px;color:#666;font-weight:normal;">1</div>
<div class="t" style="left:635.2px;top:444.99px;font-size:6.15px;line-height:9.225000000000001px;color:#666;font-weight:normal;">攻击事件</div>
<div class="t" style="left:719.4px;top:444.99px;font-size:6.15px;line-height:9.225000000000001px;color:#666;font-weight:normal;">漏洞攻击</div>
<div class="t" style="left:802.4px;top:444.95px;font-size:6.2px;line-height:9.3px;color:#ec6a62;font-weight:normal;">未处理</div>
<div class="t" style="left:886.1px;top:445.10px;font-size:6px;line-height:9.0px;color:#666;font-weight:normal;">2020-03-19 13:34:19</div>
<div class="t" style="left:970px;top:445.10px;font-size:6px;line-height:9.0px;color:#1c6ff0;font-weight:normal;">处理</div>
<div class="t" style="left:986.6px;top:445.10px;font-size:6px;line-height:9.0px;color:#1c6ff0;font-weight:normal;">忽略</div>
<div class="t" style="left:1003.4px;top:445.10px;font-size:6px;line-height:9.0px;color:#1c6ff0;font-weight:normal;">详情</div>
<div class="r" style="left:117.5px;top:458.9px;width:931px;height:0.8px;background:#ececec;"></div>
<div class="r" style="left:123px;top:466.7px;width:8px;height:8.6px;border:0.8px solid #d5d5d5;background:#fff;border-radius:0.5px;"></div>
<div class="t" style="left:135.6px;top:468.69px;font-size:6.15px;line-height:9.225000000000001px;color:#1c6ff0;font-weight:normal;">机器批量控制利用</div>
<div class="r" style="left:219.4px;top:466.8px;width:20.2px;height:10px;background:#fdeae8;"></div>
<div class="t" style="left:219.50px;width:20px;text-align:center;top:468.80px;font-size:6px;line-height:9.0px;color:#e86a62;font-weight:normal;">高危</div>
<div class="t" style="left:301.8px;top:468.80px;font-size:6px;line-height:9.0px;color:#666;font-weight:normal;">11</div>
<div class="t" style="left:323.6px;top:468.80px;font-size:6px;line-height:9.0px;color:#666;font-weight:normal;">40.38</div>
<div class="r" style="left:308px;top:465.7px;width:16.6px;height:11.5px;background:#f1f1f1;border-radius:5px;filter:blur(0.9px);"></div>
<div class="t" style="left:385.2px;top:468.80px;font-size:6px;line-height:9.0px;color:#666;font-weight:normal;">11</div>
<div class="t" style="left:406.4px;top:468.80px;font-size:6px;line-height:9.0px;color:#666;font-weight:normal;">4.243</div>
<div class="r" style="left:392.5px;top:465.7px;width:14.9px;height:11.5px;background:#f1f1f1;border-radius:5px;filter:blur(0.9px);"></div>
<div class="t" style="left:468.2px;top:468.80px;font-size:6px;line-height:9.0px;color:#666;font-weight:normal;">ins</div>
<div class="t" style="left:494px;top:468.80px;font-size:6px;line-height:9.0px;color:#666;font-weight:normal;">mn9n</div>
<div class="r" style="left:477px;top:465.7px;width:18px;height:11.5px;background:#f1f1f1;border-radius:5px;filter:blur(0.9px);"></div>
<div class="t" style="left:551.6px;top:468.80px;font-size:6px;line-height:9.0px;color:#666;font-weight:normal;">4</div>
<div class="t" style="left:635.2px;top:468.69px;font-size:6.15px;line-height:9.225000000000001px;color:#666;font-weight:normal;">攻击事件</div>
<div class="t" style="left:719.4px;top:468.69px;font-size:6.15px;line-height:9.225000000000001px;color:#666;font-weight:normal;">可疑行为</div>
<div class="t" style="left:802.4px;top:468.65px;font-size:6.2px;line-height:9.3px;color:#ec6a62;font-weight:normal;">未处理</div>
<div class="t" style="left:886.1px;top:468.80px;font-size:6px;line-height:9.0px;color:#666;font-weight:normal;">2020-03-19 13:20:11</div>
<div class="t" style="left:970px;top:468.80px;font-size:6px;line-height:9.0px;color:#1c6ff0;font-weight:normal;">处理</div>
<div class="t" style="left:986.6px;top:468.80px;font-size:6px;line-height:9.0px;color:#1c6ff0;font-weight:normal;">忽略</div>
<div class="t" style="left:1003.4px;top:468.80px;font-size:6px;line-height:9.0px;color:#1c6ff0;font-weight:normal;">详情</div>
<div class="r" style="left:117.5px;top:482.6px;width:931px;height:0.8px;background:#ececec;"></div>
<div class="r" style="left:1068px;top:25px;width:12px;height:442px;background:#f1f1f1;"></div>
<div class="r" style="left:1069px;top:37px;width:11px;height:318px;background:#c1c1c1;"></div>
<svg style="left:1071px;top:28px" width="7" height="5"><path d="M0.5 4L3.5 1L6.5 4Z" fill="#505050"/></svg>
<svg style="left:1071px;top:458px" width="7" height="5"><path d="M0.5 1L3.5 4L6.5 1Z" fill="#505050"/></svg>
<svg style="left:1043.5px;top:429.7px" width="26" height="26" viewBox="0 0 26 26"><circle cx="13" cy="13" r="12.3" fill="#1f9bf0"/><path d="M7.5 8.5H18.5V16H12L9.5 18.2V16H7.5Z" fill="#fff"/><path d="M10.5 12.6H15.5" stroke="#2a5f90" stroke-width="1.1"/></svg>
</body></html>
